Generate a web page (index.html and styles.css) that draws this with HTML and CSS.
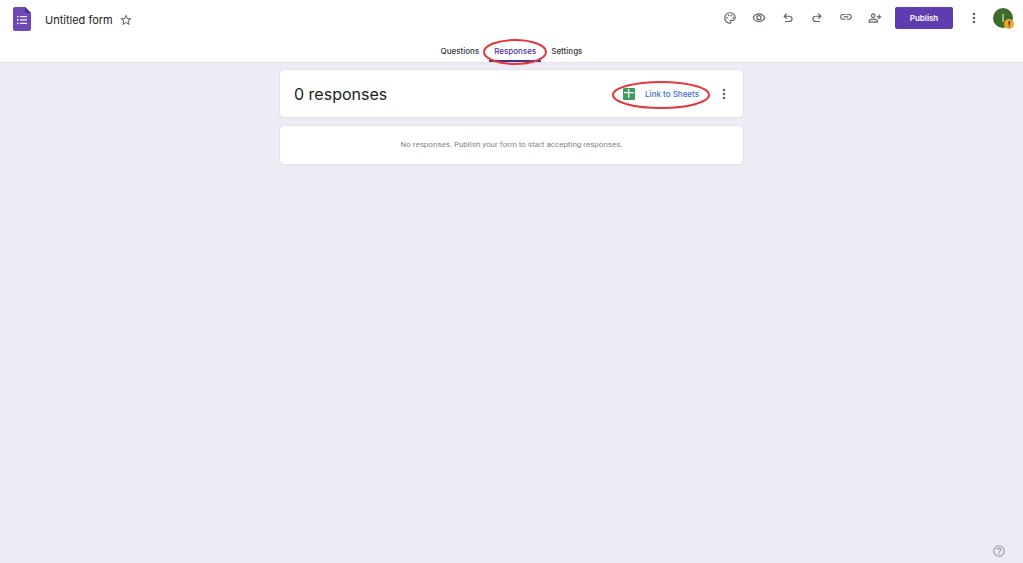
FILE: index.html
```html
<!DOCTYPE html>
<html lang="en">
<head>
  <meta charset="utf-8">
  <meta name="viewport" content="width=device-width, initial-scale=1">
  <title>Untitled form</title>
  <link rel="stylesheet" href="styles.css">
</head>
<body>
  <header class="header">
    <div class="toolbar">
      <a class="logo" href="#" aria-label="Forms home">
        <svg width="18" height="24" viewBox="0 0 18 24">
          <path fill="#6f48b7" d="M2 0h10l6 6v16a2 2 0 0 1-2 2H2a2 2 0 0 1-2-2V2a2 2 0 0 1 2-2z"/>
          <path fill="#4f2d91" d="M12 0l6 6h-5a1 1 0 0 1-1-1z"/>
          <path fill="#f3eefb" d="M7 9h7v1.300H7zM7 12.300h7v1.300H7zM7 15.700h7V17H7z"/>
          <circle fill="#f3eefb" cx="4.800" cy="9.600" r="0.900"/>
          <circle fill="#f3eefb" cx="4.800" cy="13" r="0.900"/>
          <circle fill="#f3eefb" cx="4.800" cy="16.400" r="0.900"/>
        </svg>
      </a>
      <h1 class="form-title">Untitled form</h1>
      <button class="icon-button" aria-label="Star">
        <svg viewBox="0 0 24 24"><path d="M22 9.240l-7.190-.620L12 2 9.190 8.630 2 9.240l5.460 4.730L5.820 21 12 17.270 18.180 21l-1.630-7.030L22 9.240zM12 15.400l-3.760 2.270 1-4.280-3.320-2.880 4.380-.380L12 6.100l1.710 4.040 4.380.380-3.320 2.880 1 4.280L12 15.400z"/></svg>
      </button>

      <div class="actions">
        <button class="icon-button" aria-label="Customize theme">
          <svg viewBox="0 0 24 24"><path d="M12 22C6.490 22 2 17.510 2 12S6.490 2 12 2s10 4.040 10 9c0 3.310-2.690 6-6 6h-1.770c-.280 0-.500.220-.500.500 0 .120.050.230.130.330.410.470.640 1.060.640 1.670A2.500 2.500 0 0 1 12 22zm0-18c-4.410 0-8 3.590-8 8s3.590 8 8 8c.280 0 .500-.220.500-.500a.540.540 0 0 0-.140-.350c-.410-.460-.630-1.050-.630-1.650a2.500 2.500 0 0 1 2.500-2.500H16c2.210 0 4-1.790 4-4 0-3.860-3.590-7-8-7z"/><circle cx="6.500" cy="11.500" r="1.500"/><circle cx="9.500" cy="7.500" r="1.500"/><circle cx="14.500" cy="7.500" r="1.500"/><circle cx="17.500" cy="11.500" r="1.500"/></svg>
        </button>
        <button class="icon-button" aria-label="Preview">
          <svg viewBox="0 0 24 24"><path d="M12 6a9.770 9.770 0 0 1 8.820 5.500A9.760 9.760 0 0 1 12 17a9.760 9.760 0 0 1-8.820-5.500A9.770 9.770 0 0 1 12 6m0-2C7 4 2.730 7.110 1 11.500 2.730 15.890 7 19 12 19s9.270-3.110 11-7.500C21.270 7.110 17 4 12 4zm0 5a2.500 2.500 0 0 1 0 5 2.500 2.500 0 0 1 0-5m0-2a4.500 4.500 0 0 0 0 9 4.500 4.500 0 0 0 0-9z"/></svg>
        </button>
        <button class="icon-button" aria-label="Undo">
          <svg viewBox="0 0 24 24"><path d="M7 19v-2h7.100q1.575 0 2.738-1T18 13.500 16.838 11 14.100 10H7.800l2.600 2.600L9 14 4 9l5-5 1.400 1.400L7.800 8h6.300q2.425 0 4.163 1.575T20 13.500t-1.737 3.925T14.100 19z"/></svg>
        </button>
        <button class="icon-button" aria-label="Redo">
          <svg viewBox="0 0 24 24"><path d="M9.900 19q-2.425 0-4.163-1.575T4 13.500t1.737-3.925T9.900 8h6.300l-2.600-2.600L15 4l5 5-5 5-1.400-1.400 2.600-2.600H9.900q-1.575 0-2.738 1T6 13.500 7.162 16 9.900 17H17v2z"/></svg>
        </button>
        <button class="icon-button" aria-label="Copy responder link">
          <svg viewBox="0 0 24 24"><path d="M3.900 10c0-1.710 1.390-3.100 3.100-3.100h4V5H7a5 5 0 0 0 0 10h4v-1.900H7c-1.710 0-3.100-1.390-3.100-3.100zM8 11h8V9H8v2zm9-6h-4v1.900h4c1.710 0 3.100 1.390 3.100 3.100s-1.390 3.100-3.100 3.100h-4V15h4a5 5 0 0 0 0-10z"/></svg>
        </button>
        <button class="icon-button" aria-label="Share">
          <svg viewBox="0 0 24 24"><path d="M9 12a4 4 0 1 0 0-8 4 4 0 0 0 0 8zm0-6a2 2 0 1 1 0 4 2 2 0 0 1 0-4zm0 7c-2.670 0-8 1.340-8 4v3h16v-3c0-2.660-5.330-4-8-4zm6 5H3v-.990C3.200 16.290 6.300 15 9 15s5.800 1.290 6 2v1zM20 9V6h-2v3h-3v2h3v3h2v-3h3V9z"/></svg>
        </button>
        <button class="publish">Publish</button>
        <button class="icon-button" aria-label="More options">
          <svg viewBox="0 0 24 24"><circle cx="12" cy="5" r="2.200"/><circle cx="12" cy="12" r="2.200"/><circle cx="12" cy="19" r="2.200"/></svg>
        </button>
        <button class="avatar" aria-label="Account">
          I
          <span class="avatar-alert">!</span>
        </button>
      </div>
    </div>

    <nav class="tabs">
      <a class="tab" href="#questions">Questions</a>
      <a class="tab active" href="#responses">
        Responses
        <svg class="marker" viewBox="0 0 64 26"><ellipse cx="32" cy="13" rx="31" ry="12"/></svg>
      </a>
      <a class="tab" href="#settings">Settings</a>
    </nav>
  </header>

  <main class="content">
    <section class="card summary">
      <h2 class="count">0 responses</h2>
      <button class="link-sheets">
        <svg width="12" height="12" viewBox="0 0 12 12">
          <rect fill="#3f9b5b" width="12" height="12" rx="1"/>
          <path fill="#fff" d="M1 4h10v1.300H1zM5 1h1.300v9H5z"/>
        </svg>
        Link to Sheets
        <svg class="marker" viewBox="0 0 98 30"><ellipse cx="49" cy="16" rx="48" ry="13"/></svg>
      </button>
      <button class="icon-button" aria-label="Response options">
        <svg viewBox="0 0 24 24"><circle cx="12" cy="5" r="2.200"/><circle cx="12" cy="12" r="2.200"/><circle cx="12" cy="19" r="2.200"/></svg>
      </button>
    </section>
    <section class="card empty">
      <p>No responses. Publish your form to start accepting responses.</p>
    </section>
  </main>

  <button class="icon-button help" aria-label="Help">
    <svg viewBox="0 0 24 24"><path d="M11 18h2v-2h-2v2zm1-16a10 10 0 1 0 0 20 10 10 0 0 0 0-20zm0 18a8 8 0 1 1 0-16 8 8 0 0 1 0 16zm0-14a4 4 0 0 0-4 4h2a2 2 0 1 1 4 0c0 2-3 1.750-3 5h2c0-2.250 3-2.500 3-5a4 4 0 0 0-4-4z"/></svg>
  </button>
</body>
</html>
```
FILE: styles.css
```css
* {
  margin: 0;
  padding: 0;
  box-sizing: border-box;
}

body {
  min-height: 100vh;
  background: #eeebf7;
  color: #202124;
  font-family: Inter, "Liberation Sans", sans-serif;
}

button {
  border: none;
  background: none;
  font-family: inherit;
  cursor: pointer;
}

a {
  text-decoration: none;
}

.header {
  background: #fff;
  border-bottom: 1px solid #e2e0e8;
}

.toolbar {
  display: flex;
  align-items: center;
  height: 39px;
  padding: 0 10px 0 13px;
}

.logo {
  display: flex;
  margin-right: 14px;
  padding-bottom: 2px;
}

.form-title {
  margin-right: 6px;
  font-size: 11px;
  font-weight: 400;
  line-height: 16px;
}

.icon-button {
  display: flex;
  align-items: center;
  justify-content: center;
  width: 14px;
  height: 14px;
}

.icon-button svg {
  width: 14px;
  height: 14px;
  fill: #5f6368;
}

.actions {
  display: flex;
  align-items: center;
  gap: 15px;
  margin-left: auto;
  padding-bottom: 4px;
}

.publish {
  width: 58px;
  height: 22px;
  margin: 0 -1px 0 -2px;
  border-radius: 2px;
  background: #613bb0;
  color: #fff;
  font-size: 8px;
  font-weight: 600;
}

.avatar {
  position: relative;
  width: 20px;
  height: 20px;
  margin-left: -3px;
  border-radius: 50%;
  background: #3f6b29;
  color: #dfe8d9;
  font-size: 11px;
}

.avatar-alert {
  position: absolute;
  right: -1px;
  bottom: -1px;
  width: 10px;
  height: 10px;
  border-radius: 50%;
  background: #f0a62f;
  color: #202124;
  font-size: 8px;
  font-weight: 700;
  line-height: 10px;
}

.tabs {
  display: flex;
  justify-content: center;
  gap: 5px;
  height: 23px;
}

.tab {
  position: relative;
  padding: 5px 5px 0;
  border-bottom: 2px solid transparent;
  color: #34373b;
  font-size: 8px;
  font-weight: 500;
  line-height: 14px;
}

.tab.active {
  border-bottom-color: #48308d;
  color: #50339b;
}

/* red ring drawn around the control it sits in */
.marker {
  position: absolute;
  top: 50%;
  left: 50%;
  transform: translate(-50%, -50%);
  fill: none;
  stroke: #e5383b;
  stroke-width: 2;
  pointer-events: none;
}

.tab .marker {
  top: 13px;
  width: 64px;
  height: 26px;
}

.content {
  display: flex;
  flex-direction: column;
  gap: 7px;
  width: 100%;
  max-width: 465px;
  margin: 0 auto;
  padding-top: 6px;
}

.card {
  border: 1px solid #e4e1ea;
  border-radius: 5px;
  background: #fff;
}

.summary {
  display: flex;
  align-items: center;
  min-height: 49px;
  padding: 0 12px 0 14px;
}

.count {
  margin-right: auto;
  font-size: 16px;
  font-weight: 400;
  line-height: 24px;
}

.link-sheets {
  position: relative;
  display: flex;
  align-items: center;
  gap: 10px;
  margin-right: 18px;
  color: #3b70da;
  font-size: 8px;
  font-weight: 500;
  line-height: 14px;
}

.link-sheets .marker {
  width: 98px;
  height: 30px;
}

.empty {
  padding: 12px;
  color: #80858b;
  font-family: Roboto, sans-serif;
  font-size: 8px;
  line-height: 14px;
  text-align: center;
}

.help {
  position: fixed;
  right: 17px;
  bottom: 5px;
}

.help svg {
  fill: #9a98a3;
}
```
